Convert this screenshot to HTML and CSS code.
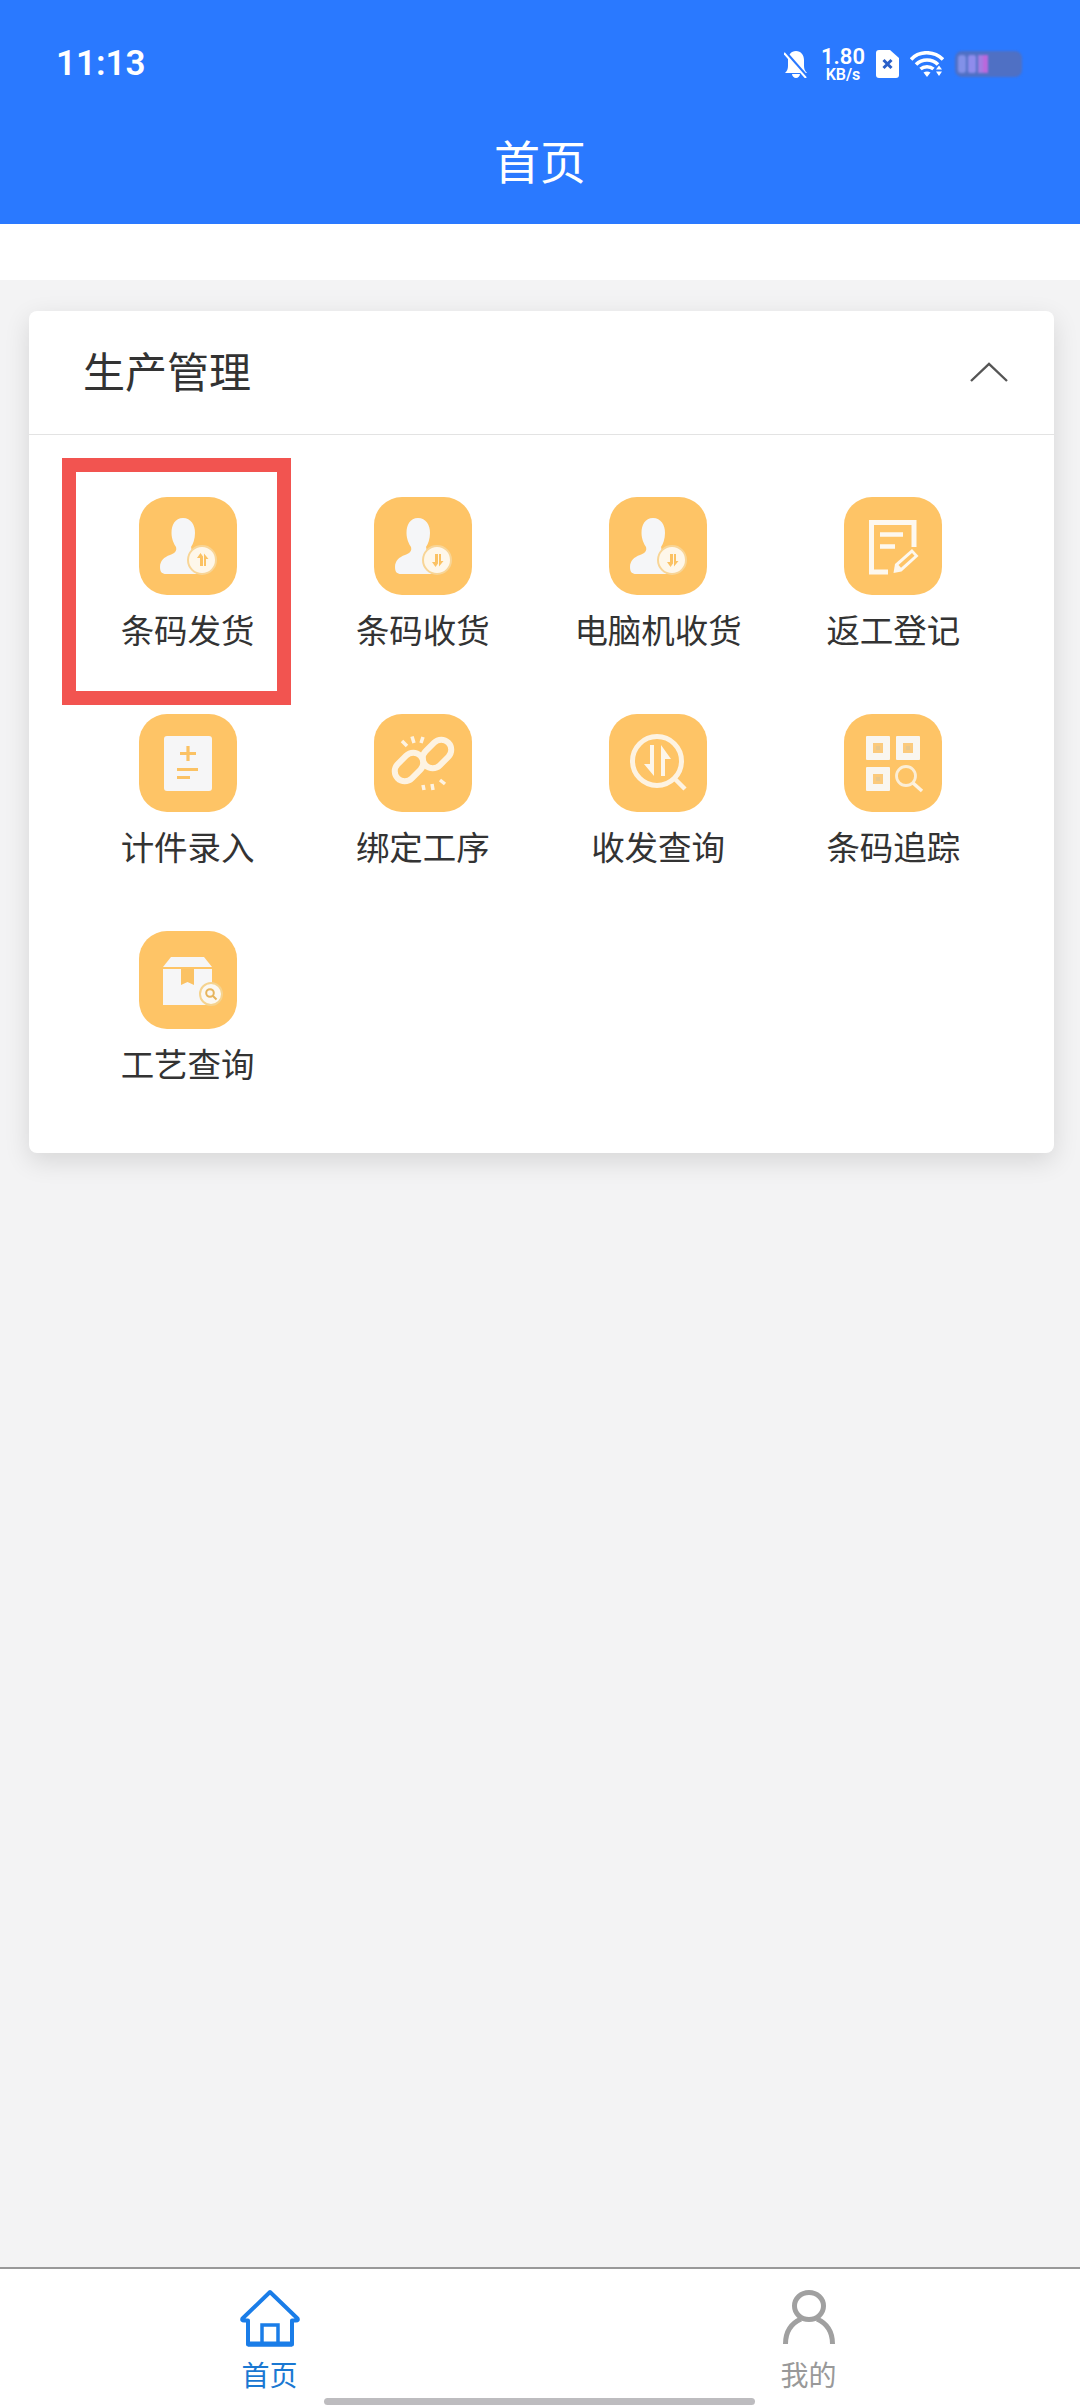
FILE: index.html
```html
<!DOCTYPE html>
<html lang="zh-CN">
<head>
<meta charset="utf-8">
<title>首页</title>
<link rel="stylesheet" href="styles.css">
</head>
<body>
<div class="page">
  <header class="header">
    <div class="status">
      <span class="time">11:13</span>
      <div class="status-icons">
        <svg class="s-bell" viewBox="0 0 24 27"><path d="M12 0c-5 0-8 4-8 9v6c0 3-1 5-3 7h22c-2-2-3-4-3-7V9c0-5-3-9-8-9zM8 23c0 2 2 4 4 4s4-2 4-4z" fill="#fff"/><path d="M1 1 23 26" stroke="#2a79ff" stroke-width="3.500"/><path d="M0 2 22 27" stroke="#fff" stroke-width="2"/></svg>
        <div class="speed"><span class="speed-num">1.80</span><span class="speed-unit">KB/s</span></div>
        <svg class="s-sim" viewBox="0 0 23 28"><path d="M3 0h11l9 8v17a3 3 0 0 1-3 3H3a3 3 0 0 1-3-3V3a3 3 0 0 1 3-3z" fill="#fff"/><path d="M7.500 10 15.500 18M15.500 10 7.500 18" stroke="#2a5fc8" stroke-width="3"/></svg>
        <svg class="s-wifi" viewBox="0 0 34 26"><g fill="none" stroke="#fff" stroke-width="3.600"><path d="M1 8.500C9-.5 24-.5 33 8.500"/><path d="M6 13.500C12 7.500 22 7.500 28 13.500"/><path d="M10.500 18C14 15 20 15 23.500 18"/></g><path d="M13.500 21.500C15.500 20 18.500 20 20.500 21.500L17 26z" fill="#fff"/><path d="M26 18.500h6l-3-4zM26 20.500h6l-3 4.500z" fill="#fff"/></svg>
        <svg class="s-batt" viewBox="0 0 67 26"><rect width="67" height="26" rx="7" fill="#4f70c4"/><rect x="3" y="4" width="8" height="18" rx="3" fill="#8291e8"/><rect x="13" y="4" width="8" height="18" rx="2" fill="#8f8cec"/><rect x="23" y="4" width="5" height="18" fill="#a57ce2"/><rect x="28" y="4" width="5" height="18" fill="#bb68dc"/></svg>
      </div>
    </div>
    <h1 class="title">首页</h1>
  </header>
  <div class="band"></div>
  <main class="main">
    <section class="card">
      <div class="card-head">
        <h2 class="card-title">生产管理</h2>
        <svg class="chevron" viewBox="0 0 38 20"><path d="M1 19 19 2 37 19" fill="none" stroke="#555" stroke-width="2.400"/></svg>
      </div>
      <div class="grid">
        <div class="item">
          <span class="highlight"></span>
          <svg class="tile" viewBox="0 0 98 98"><use href="#person"/><circle cx="63" cy="63" r="14" fill="#fef7ea" stroke="#f8d596" stroke-width="2"/><path d="M61 69V61H58l3.500-5 2.500 3.500V69zM65 69V56.500l4.500 5.500H67v7z" fill="#fbc264"/></svg>
          <span class="label">条码发货</span>
        </div>
        <div class="item">
          <svg class="tile" viewBox="0 0 98 98"><use href="#person"/><circle cx="63" cy="63" r="14" fill="#fef7ea" stroke="#f8d596" stroke-width="2"/><use href="#down"/></svg>
          <span class="label">条码收货</span>
        </div>
        <div class="item">
          <svg class="tile" viewBox="0 0 98 98"><use href="#person"/><circle cx="63" cy="63" r="14" fill="#fef7ea" stroke="#f8d596" stroke-width="2"/><use href="#down"/></svg>
          <span class="label">电脑机收货</span>
        </div>
        <div class="item">
          <svg class="tile" viewBox="0 0 98 98"><g fill="none" stroke="#fdf8ef" stroke-width="5"><path d="M70 50V25.500H27.500V75H44"/><path d="M36 37.500H59M36 49.500H51" stroke-width="4.500"/></g><path d="M51 67 68 52l6.500 7-17 15.500-8 1.500z" fill="#fdf8ef"/><path d="M54.500 68 68 56l2.500 2.800-13.500 12z" fill="#fec466"/></svg>
          <span class="label">返工登记</span>
        </div>
        <div class="item">
          <svg class="tile" viewBox="0 0 98 98"><rect x="25" y="22" width="48" height="55" rx="3" fill="#f6f6f7"/><path d="M49 32V47M41 39.500H57M38 55.500H59M38 63.500H51" stroke="#fbc264" stroke-width="3.200" fill="none"/></svg>
          <span class="label">计件录入</span>
        </div>
        <div class="item">
          <svg class="tile" viewBox="0 0 98 98"><g fill="none" stroke="#fdf3e2" stroke-width="6"><rect x="19" y="43" width="32" height="20" rx="10" transform="rotate(-45 35 53)"/><rect x="47" y="30" width="32" height="20" rx="10" transform="rotate(-45 63 40)"/></g><path d="M28 27 33 32M38 22.500 40 29M49 23 47 29M49 71 50 76M58 70 59 76M66 66 71 70" stroke="#fdf3e2" stroke-width="3.500" fill="none"/></svg>
          <span class="label">绑定工序</span>
        </div>
        <div class="item">
          <svg class="tile" viewBox="0 0 98 98"><circle cx="48" cy="47" r="24.500" fill="none" stroke="#fdf3e2" stroke-width="5"/><path d="M66 65 76 75" stroke="#fdf3e2" stroke-width="4.500"/><path d="M45 31V62L35 50H41V31zM52 62V31L62 45H56V62z" fill="#fdf6ea"/></svg>
          <span class="label">收发查询</span>
        </div>
        <div class="item">
          <svg class="tile" viewBox="0 0 98 98"><g fill="#f9f6f0"><rect x="22" y="22" width="24" height="24" rx="1"/><rect x="52" y="22" width="24" height="24" rx="1"/><rect x="22" y="53" width="24" height="24" rx="1"/></g><g fill="#fbca7c"><rect x="29" y="29" width="10" height="10"/><rect x="59" y="29" width="10" height="10"/><rect x="29" y="60" width="10" height="10"/></g><g fill="#e8c78c"><rect x="32" y="32" width="4" height="4"/><rect x="62" y="32" width="4" height="4"/><rect x="32" y="63" width="4" height="4"/></g><circle cx="62" cy="62" r="9.500" fill="none" stroke="#fbeed6" stroke-width="2.800"/><path d="M69 69 78 77" stroke="#fdf3e2" stroke-width="3.500"/></svg>
          <span class="label">条码追踪</span>
        </div>
        <div class="item">
          <svg class="tile" viewBox="0 0 98 98"><path d="M24 36 32 26H65L73 36z" fill="#f6f6f7"/><path d="M24 38H73V74H24z" fill="#f6f6f7"/><path d="M42 38H55V54L48.500 51 42 54z" fill="#fbc264"/><circle cx="72" cy="63" r="11" fill="#fbf8f2" stroke="#f5d38f" stroke-width="2"/><circle cx="71" cy="62" r="3.800" fill="none" stroke="#e6b45c" stroke-width="2"/><path d="M74 65 77.500 68.500" stroke="#e6b45c" stroke-width="2"/></svg>
          <span class="label">工艺查询</span>
        </div>
      </div>
    </section>
  </main>
  <nav class="tabbar">
    <div class="tab tab-active">
      <svg class="tab-icon" viewBox="0 0 60 58"><path d="M30 3 2.500 29.500Q1.500 31.500 4 31.500H8V55.500H52V31.500H56Q58.500 31.500 57.500 29.500Z" fill="none" stroke="#1a7de8" stroke-width="4" stroke-linejoin="round"/><path d="M22 55V36H38V55" fill="none" stroke="#1a7de8" stroke-width="3.500"/><path d="M8 55H52" stroke="#1a7de8" stroke-width="5"/></svg>
      <span class="tab-label">首页</span>
    </div>
    <div class="tab">
      <svg class="tab-icon" viewBox="0 0 60 58"><ellipse cx="30" cy="17" rx="14.500" ry="13.500" fill="none" stroke="#a0a0a0" stroke-width="5"/><path d="M6.500 55C6.500 42 13 34 22 30M53.500 55C53.500 42 47 34 38 30" fill="none" stroke="#a0a0a0" stroke-width="5"/></svg>
      <span class="tab-label">我的</span>
    </div>
    <span class="home-bar"></span>
  </nav>
</div>
<svg class="defs" width="0" height="0"><defs>
  <path id="person" d="M44 21C36 21 32.500 28 32.500 36 32.500 42 35 47 37 50 38 54 36 56 31 58 25 60 21 64 21 70 21 75 23 77 27 77H58C54 73 50 68 51 62 52 57 53 52 52 50 54 47 56 42 56 36 56 28 52 21 44 21z" fill="#f5f6f8"/>
  <path id="down" d="M61 57V65H58l3.500 5 2.500-3.500V57zM65 57V69.500l4.500-5.500H67V57z" fill="#fbc264"/>
</defs></svg>
</body>
</html>
```
FILE: styles.css
```css
* { box-sizing: border-box; }
html, body { margin: 0; padding: 0; }
body { font-family: "Noto Sans CJK SC", "Noto Sans", sans-serif; color: #333; background: #f3f3f4; }
.page { width: 1080px; height: 2408px; display: flex; flex-direction: column; overflow: hidden; }
.header { height: 224px; background: #2a79ff; color: #fff; padding-top: 44px; display: flex; flex-direction: column; align-items: center; flex: none; }
.status { width: 100%; height: 40px; padding: 0 58px 0 56px; display: flex; justify-content: space-between; align-items: center; }
.time { font-family: Roboto, "Liberation Sans", sans-serif; font-size: 35px; font-weight: 600; line-height: 40px; }
.status-icons { display: flex; align-items: center; }
.s-bell { width: 24px; height: 27px; margin-right: 12px; }
.speed { width: 46px; display: flex; flex-direction: column; align-items: center; margin-right: 10px; }
.speed-num { font-family: Roboto, "Liberation Sans", sans-serif; font-size: 22px; line-height: 21px; font-weight: 600; }
.speed-unit { font-family: Roboto, "Liberation Sans", sans-serif; font-size: 16px; line-height: 16px; font-weight: 600; }
.s-sim { width: 23px; height: 28px; margin-right: 11px; }
.s-wifi { width: 34px; height: 26px; margin-right: 11px; }
.s-batt { width: 67px; height: 26px; filter: blur(1px); }
.title { margin: 45px 0 0; font-size: 46px; line-height: 60px; font-weight: 400; }
.band { height: 56px; background: #fff; flex: none; }
.main { flex: 1; padding: 31px 26px 0 29px; }
.card { height: 842px; background: #fff; border-radius: 8px; box-shadow: 0 8px 26px rgba(0, 0, 0, .12); }
.card-head { height: 124px; padding: 0 46px 6px 54px; border-bottom: 1px solid #e3e3e3; display: flex; justify-content: space-between; align-items: center; }
.card-title { margin: 0; font-size: 42px; font-weight: 400; color: #333; }
.chevron { width: 38px; height: 20px; margin-top: 4px; }
.grid { padding: 62px 43px 0 41px; display: grid; grid-template-columns: repeat(4, 1fr); grid-auto-rows: 217px; }
.item { position: relative; display: flex; flex-direction: column; align-items: center; }
.tile { width: 98px; height: 98px; background: #fec466; border-radius: 28px; flex: none; }
.label { margin-top: 12px; font-size: 33.500px; line-height: 44px; white-space: nowrap; color: #333; }
.highlight { position: absolute; left: -8px; top: -39px; width: 229px; height: 247px; border: 14px solid #f25450; }
.tabbar { position: relative; height: 141px; flex: none; background: #fff; border-top: 2px solid #999; display: flex; padding: 20px 2px 0 0; }
.tab { flex: 1; display: flex; flex-direction: column; align-items: center; }
.tab-icon { width: 60px; height: 58px; }
.tab-label { margin-top: 9px; font-size: 28px; line-height: 36px; color: #999; }
.tab-active .tab-label { color: #1a78d2; }
.home-bar { position: absolute; left: 324px; bottom: 3px; width: 431px; height: 7px; border-radius: 4px; background: #bdbcbf; }
.defs { position: absolute; }
```
